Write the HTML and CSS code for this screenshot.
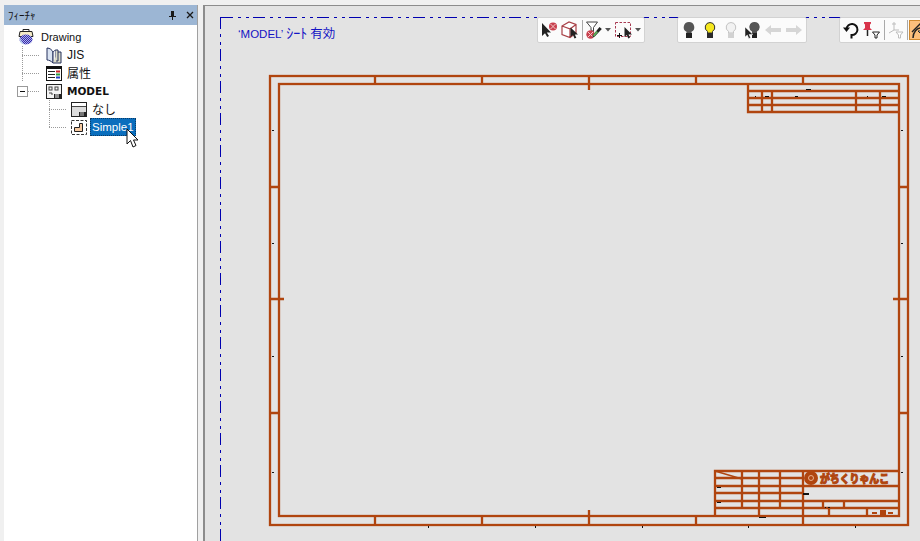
FILE: index.html
```html
<!doctype html>
<html lang="ja">
<head>
  <meta charset="UTF-8">
  <title>フィーチャ</title>
  <link rel="stylesheet" href="styles.css">
</head>

<body>
  <aside class="panel">
    <header class="panel-head">
      <span class="panel-title">ﾌｨｰﾁｬ</span>
      <svg class="pin" width="7" height="9" viewBox="0 0 7 9"><path d="M2 0h3v5h2v1H4v3H3V6H0V5h2z" fill="#1a1a1a"/></svg>
      <svg class="close" width="8" height="8" viewBox="0 0 8 8"><path d="M1 1l6 6M7 1L1 7" stroke="#1a1a1a" stroke-width="1.3"/></svg>
    </header>

    <ul class="tree">
      <li class="row row-root">
        <svg class="node-icon" width="16" height="16" viewBox="0 0 16 16">
          <defs>
            <pattern id="hatch" width="2" height="2" patternUnits="userSpaceOnUse"><rect width="2" height="2" fill="#a9b6ee"/><rect width="1" height="1" fill="#3b27a8"/><rect x="1" y="1" width="1" height="1" fill="#3b27a8"/></pattern>
          </defs>
          <path d="M2 2.500h12l1 5H1z" fill="#f6ecc8" stroke="#222"/>
          <path d="M5 2.500V.5h6v2" fill="none" stroke="#222"/>
          <ellipse cx="8" cy="10.500" rx="6.500" ry="5" fill="url(#hatch)"/>
          <path d="M1.500 9c2 2 3 5 5 6.500-3-.5-5-2.500-5-6.500z" fill="#bcd4f2"/>
        </svg>
        <span class="label">Drawing</span>
      </li>

      <li class="row row-l1">
        <span class="elbow elbow-full"></span>
        <svg class="node-icon" width="16" height="17" viewBox="0 0 16 17">
          <path d="M1 1c3 0 5 2 6 4v11c-2-2-4-3-6-3z" fill="#dbe4f2" stroke="#24305c"/>
          <path d="M7 5c1-1 2-2 3-2v11c-1 0-2 1-3 2z" fill="#f2f2f2" stroke="#24305c"/>
          <path d="M10 3h2v11h-2M12 5h3v11H7" fill="#dcdcc8" stroke="#24305c"/>
        </svg>
        <span class="label label-l1">JIS</span>
      </li>

      <li class="row row-l1">
        <span class="elbow elbow-full"></span>
        <svg class="node-icon" width="16" height="15" viewBox="0 0 16 15">
          <rect x=".5" y=".5" width="15" height="14" fill="#fff" stroke="#111"/>
          <rect x="1" y="1" width="14" height="2" fill="#111"/>
          <path d="M2 5.500h7M2 8.500h7M2 11.500h7" stroke="#222"/>
          <rect x="10" y="4.500" width="4" height="2" fill="#c8242a"/>
          <rect x="10" y="7.500" width="4" height="2" fill="#2a9a3a"/>
          <rect x="10" y="10.500" width="4" height="2" fill="#2440c0"/>
        </svg>
        <span class="label label-l1 label-cjk">属性</span>
      </li>

      <li class="row row-model">
        <span class="expander"><i></i></span>
        <span class="expander-line"></span>
        <svg class="node-icon" width="16" height="15" viewBox="0 0 16 15">
          <rect x=".5" y=".5" width="15" height="14" fill="#f4f4f4" stroke="#222"/>
          <rect x="3" y="3" width="3" height="3" fill="none" stroke="#444"/>
          <rect x="9" y="3" width="3" height="3" fill="none" stroke="#444"/>
          <path d="M3 9h3v2" fill="none" stroke="#444"/>
          <rect x="8" y="10" width="7" height="4" fill="#222"/>
          <path d="M10 10v4M12 10v4" stroke="#fff"/>
        </svg>
        <span class="label label-l1 label-bold">MODEL</span>
      </li>

      <li class="row row-l2">
        <span class="elbow elbow-full"></span>
        <svg class="node-icon" width="16" height="15" viewBox="0 0 16 15">
          <rect x=".5" y=".5" width="15" height="14" fill="#dcdcdc" stroke="#222"/>
          <rect x="1" y="1" width="14" height="3" fill="#fff"/>
          <path d="M1 4.500h14" stroke="#444"/>
          <rect x="8" y="10" width="7" height="4" fill="#222"/>
          <path d="M10 10v4M12 10v4" stroke="#ccc"/>
        </svg>
        <span class="label label-l2 label-cjk">なし</span>
      </li>

      <li class="row row-l2">
        <span class="elbow elbow-half"></span>
        <svg class="node-icon" width="16" height="15" viewBox="0 0 16 15">
          <rect x=".5" y=".5" width="15" height="14" fill="#fff" stroke="#333" stroke-dasharray="3 1.500"/>
          <path d="M8.500 3.500h3v8h-8v-4h5z" fill="#f6c9a0" stroke="#222"/>
        </svg>
        <span class="label label-selected">Simple1</span>
      </li>
    </ul>

    <svg class="cursor" width="13" height="20" viewBox="0 0 13 20">
      <path d="M1 1v15l3.500-3.500L7 19l3-1.500L7.500 12H12z" fill="#fff" stroke="#111"/>
    </svg>
  </aside>

  <main class="sheet">
    <svg class="drawing" width="715" height="535" viewBox="205 6 715 535">
      <g fill="none" stroke="#0000b0">
        <path d="M221 17.500H920M220.500 17V541" stroke-dasharray="12 5 3 5 3 4"/>
      </g>

      <g fill="none" stroke="#b0450f" stroke-width="2.300">
        <!-- frames -->
        <rect x="270" y="76" width="638" height="449"/>
        <rect x="279" y="84" width="620" height="432"/>

        <!-- zone ticks -->
        <path d="M375 76v8M482 76v8M589 76v14M696 76v8M803 76v8"/>
        <path d="M375 516v9M482 516v9M589 510v15M696 516v9M803 516v9"/>
        <path d="M270 187h9M270 299h14M270 413h9"/>
        <path d="M899 187h9M893 299h15M899 413h9"/>

        <!-- top right table -->
        <path d="M748 84v28h151M748 91h151M748 98h151M748 105h151"/>
        <path d="M762 91v21M772 91v21M856 91v21M880 91v21"/>

        <!-- title block -->
        <path d="M715 516V471h184M715 478h88M715 486h184M715 493h88M715 501h184M715 508h184"/>
        <path d="M742 471v37M759 471v45M780 471v37M803 471v45"/>
        <path d="M823 501v7M844 501v7M829 508v8M867 508v8"/>
        <path d="M715 471l27 8" stroke-width="1.500"/>
      </g>

      <!-- logo -->
      <circle cx="811" cy="478" r="7" fill="#b0450f"/>
      <circle cx="811" cy="478" r="2.500" fill="none" stroke="#e9b08c"/>
      <text class="logo-text" x="820" y="483" textLength="69" lengthAdjust="spacingAndGlyphs">がちくりゃんこ</text>

      <g fill="#b0450f">
        <rect x="872" y="512" width="5" height="2"/>
        <rect x="880" y="510" width="6" height="5"/>
        <rect x="888" y="512" width="5" height="2"/>
      </g>

      <!-- stray marks of the drawing -->
      <g fill="#111">
        <rect x="272" y="130" width="2" height="1"/>
        <rect x="272" y="243" width="2" height="1"/>
        <rect x="272" y="356" width="2" height="1"/>
        <rect x="272" y="472" width="2" height="1"/>
        <rect x="901" y="130" width="2" height="1"/>
        <rect x="901" y="243" width="2" height="1"/>
        <rect x="901" y="356" width="2" height="1"/>
        <rect x="901" y="472" width="2" height="1"/>
        <rect x="428" y="526" width="1" height="2"/>
        <rect x="535" y="526" width="1" height="2"/>
        <rect x="642" y="526" width="1" height="2"/>
        <rect x="748" y="526" width="1" height="2"/>
        <rect x="855" y="526" width="1" height="2"/>
        <rect x="806" y="89" width="5" height="1"/>
        <rect x="755" y="96" width="1" height="1"/>
        <rect x="765" y="96" width="4" height="1"/>
        <rect x="795" y="96" width="3" height="1"/>
        <rect x="867" y="96" width="1" height="1"/>
        <rect x="882" y="96" width="4" height="1"/>
        <rect x="717" y="487" width="4" height="1"/>
        <rect x="717" y="502" width="4" height="1"/>
        <rect x="803" y="493" width="6" height="2"/>
        <rect x="759" y="517" width="7" height="1"/>
        <rect x="825" y="507" width="1" height="1"/>
        <rect x="828" y="507" width="2" height="1"/>
      </g>
    </svg>

    <p class="sheet-state">‘MODEL’ <span class="state-kana">ｼｰﾄ</span> <span class="state-cjk">有効</span></p>

    <div class="toolbars">
      <div class="toolbar">
        <svg width="17" height="16" viewBox="0 0 17 16">
          <circle cx="12" cy="4.500" r="4" fill="#c8404e"/>
          <path d="M9.500 2l5 5M14.500 2l-5 5" stroke="#f3c8c8"/>
          <path d="M1 1v13l3-2.700 2.200 3.700 1.800-1-2.200-3.600H10z" fill="#222"/>
        </svg>
        <svg width="18" height="18" viewBox="0 0 18 18">
          <path d="M1 5L8 1l7 2.500V12L9 16.500 1 13.500z M1 5l8 3v8.500M9 8l6-4.500" fill="#fff" stroke="#a84046" stroke-width="1.200"/>
          <path d="M9.500 6.500v9.500l2.500-2 1.500 3.500 1.800-.8-1.500-3.200H17z" fill="#222"/>
        </svg>
        <span class="sep"></span>
        <svg width="16" height="18" viewBox="0 0 16 18">
          <path d="M.5 1h11L7.500 6.500v4L5 9V6.500z" fill="#fff" stroke="#444"/>
          <circle cx="4.500" cy="13.500" r="4.200" fill="#c8404e"/>
          <path d="M2 11l5 5M7 11l-5 5" stroke="#f3c8c8"/>
          <path d="M7 14l6.500-8 2.300 2-7 7.500-2.500 1z" fill="#222"/>
          <path d="M7 14l3.500-4 1.500 1.300-4 4.500z" fill="#5fb05a"/>
        </svg>
        <svg class="caret" width="6" height="4" viewBox="0 0 6 4"><path d="M0 0h6L3 3.500z" fill="#555"/></svg>
        <svg width="18" height="18" viewBox="0 0 18 18">
          <rect x="1.500" y="1.500" width="15" height="14" fill="none" stroke="#a83a52" stroke-dasharray="2.500 1.500"/>
          <path d="M5.500 12v5M3 14.500h5" stroke="#111"/>
          <path d="M10.500 6v10l2.300-2 1.500 3.500 1.700-.8-1.500-3.200H18z" fill="#222"/>
        </svg>
        <svg class="caret" width="6" height="4" viewBox="0 0 6 4"><path d="M0 0h6L3 3.500z" fill="#555"/></svg>
      </div>

      <div class="toolbar toolbar-wide">
        <svg width="16" height="18" viewBox="0 0 16 18">
          <path d="M8 1a5.200 5.200 0 0 1 2.500 9.800V12h-5v-1.200A5.200 5.200 0 0 1 8 1z" fill="#555"/>
          <rect x="5" y="12" width="6" height="5" fill="#222"/>
        </svg>
        <svg width="16" height="18" viewBox="0 0 16 18">
          <path d="M8 1.500a4.800 4.800 0 0 1 2.500 8.900V12h-5v-1.600A4.800 4.800 0 0 1 8 1.500z" fill="#f6e81e" stroke="#333"/>
          <rect x="5" y="12" width="6" height="5" fill="#2a2a2a"/>
        </svg>
        <svg width="16" height="18" viewBox="0 0 16 18">
          <path d="M8 1.500a4.800 4.800 0 0 1 2.500 8.900V12h-5v-1.600A4.800 4.800 0 0 1 8 1.500z" fill="#f2f2f2" stroke="#c4c4c4"/>
          <rect x="5" y="12" width="6" height="5" fill="#d2d2d2"/>
        </svg>
        <svg width="16" height="18" viewBox="0 0 16 18">
          <path d="M10.500 1a5 5 0 0 1 2.500 9.400V12H8v-1.600A5 5 0 0 1 10.500 1z" fill="#555"/>
          <rect x="8" y="12" width="5" height="5" fill="#222"/>
          <path d="M1 6v10l2.300-2 1.500 3.500 1.800-.8-1.500-3.200H9z" fill="#222" stroke="#fff" stroke-width=".5"/>
        </svg>
        <svg width="16" height="10" viewBox="0 0 16 10"><path d="M0 5l6-5v3h10v4H6v3z" fill="#d6d6d6"/></svg>
        <svg width="16" height="10" viewBox="0 0 16 10"><path d="M16 5l-6-5v3H0v4h10v3z" fill="#d6d6d6"/></svg>
      </div>

      <div class="toolbar toolbar-last">
        <svg width="16" height="18" viewBox="0 0 16 18">
          <path d="M3.500 8A5.500 5.500 0 1 1 8.500 14v3.500" fill="none" stroke="#111" stroke-width="2"/>
          <path d="M0 6.500h7L3.500 11z" fill="#111"/>
        </svg>
        <svg width="19" height="18" viewBox="0 0 19 18">
          <path d="M2 1h7v1.500L8 3.500V7l2 2H1l2-2V3.500L2 2.500z" fill="#d8344a"/>
          <path d="M5.500 9v6" stroke="#222" stroke-width="1.500"/>
          <path d="M10.500 11h7l-2.500 3v3h-2v-3z" fill="#fff" stroke="#222"/>
        </svg>
        <span class="sep"></span>
        <svg width="16" height="18" viewBox="0 0 16 18">
          <path d="M6 1v8M6 9l-5 3M6 9h5M4 3h4" fill="none" stroke="#bdbdbd"/>
          <path d="M8 11h7l-2.500 3v3h-2v-3z" fill="#fff" stroke="#bdbdbd"/>
        </svg>
        <span class="sep"></span>
        <span class="view-btn">
          <svg width="18" height="18" viewBox="0 0 18 18">
            <path d="M1 11L10 2" stroke="#222" stroke-width="1.500"/>
            <path d="M2 17c0-6 4-10 8-10s5 2 6 3" fill="none" stroke="#222" stroke-width="1.500"/>
            <path d="M7 10h9l-3 3v3H10v-3z" fill="#fff" stroke="#222"/>
          </svg>
        </span>
      </div>
    </div>
  </main>
</body>
</html>
```

FILE: styles.css
```css
*{
  box-sizing: border-box;
}

html, body{
  height: 100%;
}

body{
  display: flex;
  margin: 0;
  padding-top: 5px;
  overflow: hidden;
  color: #111;
  font-family: "Liberation Sans", "Noto Sans CJK JP", sans-serif;
  font-size: 12px;
  background-color: #f0f0f0;
}

.panel{
  position: relative;
  display: flex;
  flex-direction: column;
  flex: none;
  margin-left: 4px;
  width: 194px;
  background: #fff;
  border-right: 1px solid #a0a0a0;
}

.panel-head{
  display: flex;
  align-items: center;
  flex: none;
  padding: 0 3px 0 4px;
  height: 20px;
  background: #9cb6d4;
}

.panel-title{
  flex: 1;
  color: #111;
  font-family: "Noto Sans CJK JP", sans-serif;
  font-size: 11px;
}

.pin{
  margin-right: 10px;
}

.tree{
  margin: 0;
  padding: 3px 0 0;
  list-style: none;
}

.row{
  display: flex;
  align-items: center;
  height: 18px;
  white-space: nowrap;
}

.row-root{
  padding-left: 14px;
}

.row-l1{
  padding-left: 18px;
}

.row-model{
  padding-left: 13px;
}

.row-l2{
  padding-left: 45px;
}

.node-icon{
  flex: none;
}

.label{
  margin-left: 7px;
  font-size: 11px;
}

.label-l1, .label-l2{
  margin-left: 5px;
  font-size: 12px;
}

.label-cjk{
  padding-bottom: 2px;
}

.label-bold{
  font-family: "DejaVu Sans", sans-serif;
  font-size: 10.500px;
  font-weight: bold;
}

.label-selected{
  margin-left: 3px;
  padding: 0 2px;
  width: 46px;
  height: 18px;
  color: #fff;
  font-size: 11.500px;
  line-height: 18px;
  background: #0a6ebd;
  outline: 1px dotted #0a3a66;
  outline-offset: -1px;
}

/* dotted connectors, each one drawn as a 1px repeating gradient */
.elbow{
  flex: none;
  width: 24px;
  height: 18px;
  background-image:
    repeating-linear-gradient(180deg, #9a9a9a 0 1px, transparent 1px 2px),
    repeating-linear-gradient(90deg, #9a9a9a 0 1px, transparent 1px 2px);
  background-repeat: no-repeat;
  background-position: 0 0, 0 9px;
}

.row-l2 .elbow{
  width: 22px;
}

.elbow-full{
  background-size: 1px 18px, 17px 1px;
}

.elbow-half{
  background-size: 1px 9px, 17px 1px;
}

.expander{
  display: flex;
  align-items: center;
  justify-content: center;
  flex: none;
  width: 11px;
  height: 11px;
  background: #fff;
  border: 1px solid #9a9a9a;
}

.expander i{
  display: block;
  width: 5px;
  height: 1px;
  background: #111;
}

.expander-line{
  flex: none;
  width: 18px;
  height: 1px;
  background: repeating-linear-gradient(90deg, #9a9a9a 0 1px, transparent 1px 2px) 0 0 / 12px 1px no-repeat;
}

.cursor{
  position: absolute;
  top: 123px;
  left: 122px;
}

.sheet{
  position: relative;
  flex: 1;
  margin-left: 5px;
  overflow: hidden;
  background: #e3e3e3;
  border-top: 1px solid #8c8c8c;
  border-left: 2px solid #8c8c8c;
}

.drawing{
  display: block;
}

.logo-text{
  fill: #b0450f;
  stroke: #b0450f;
  stroke-width: 1;
  font-family: "Noto Sans CJK JP", sans-serif;
  font-size: 11px;
  font-weight: 900;
}

.sheet-state{
  position: absolute;
  top: 19px;
  left: 33px;
  margin: 0;
  color: #1414c4;
  font-size: 11.500px;
  line-height: 16px;
}

.state-kana{
  font-size: 14px;
}

.state-cjk{
  font-size: 12.500px;
}

.toolbars{
  position: absolute;
  top: 11px;
  left: 332px;
  display: flex;
  gap: 32px;
}

.toolbar{
  display: flex;
  align-items: center;
  flex: none;
  gap: 3px;
  padding: 0 3px;
  height: 26px;
  background: #fbfbfb;
  border: 1px solid #d2d2d2;
  border-radius: 2px;
}

.toolbar-wide{
  gap: 5px;
  padding-right: 4px;
}

.toolbar-last{
  width: 120px;
}

.sep{
  flex: none;
  width: 1px;
  height: 20px;
  background: #aaa;
}

.caret{
  flex: none;
}

.view-btn{
  display: flex;
  align-items: center;
  flex: none;
  margin-left: -2px;
  padding-left: 1px;
  width: 24px;
  height: 20px;
  background: #fcc07c;
  border: 1px solid #d08a30;
}
```
